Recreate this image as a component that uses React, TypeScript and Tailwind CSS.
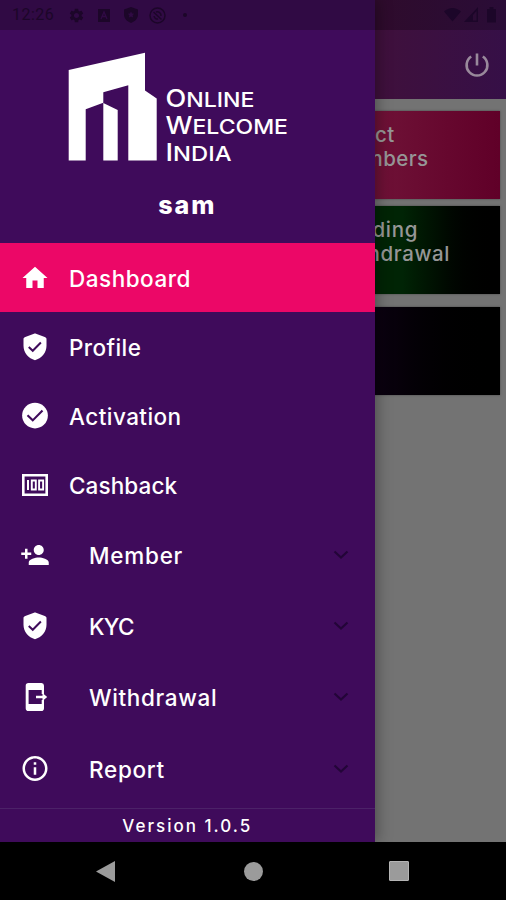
import React from 'react'
import { MdHome, MdPersonAdd, MdInfoOutline, MdSettings } from 'react-icons/md'

const ShieldIcon: React.FC = () => (
  <svg width="30" height="30" viewBox="0 0 24 24">
    <path
      d="M11.190 1.360l-7 2.610C3.070 4.390 2.800 5.010 2.800 5.800V11c0 5.550 4.040 10.240 9.200 11.500 5.160-1.260 9.200-5.950 9.200-11.500V5.800c0-.79-.27-1.410-1.390-1.830l-7-2.610c-.51-.23-1.110-.23-1.620 0z"
      fill="white"
    />
    <path d="M7 12l3.200 3 6.500-6.600" fill="none" stroke="#3f0b5b" strokeWidth="1.600" />
  </svg>
)

const CheckIcon: React.FC = () => (
  <svg width="30" height="30" viewBox="0 0 24 24">
    <circle cx="12" cy="11.600" r="10.300" fill="white" />
    <path d="M6 11.400l4.200 4.100 7.800-7.900" fill="none" stroke="#3f0b5b" strokeWidth="1.700" />
  </svg>
)

// Banknote with "100" drawn as bars
const CashIcon: React.FC = () => (
  <svg width="26" height="22" viewBox="0 0 26 22" fill="none" stroke="white">
    <path d="M1.300 1.300h23.400v19.400H1.300z" strokeWidth="2.600" />
    <path d="M6 6v10" strokeWidth="2" />
    <path d="M9.800 6.500h4v9h-4zM17.100 6.500h4v9h-4z" strokeWidth="1.900" />
  </svg>
)

const PhoneExitIcon: React.FC = () => (
  <svg width="30" height="30" viewBox="0 0 30 30">
    <path
      d="M8.500 1h13A2.800 2.800 0 0 1 24 3.800V12h-2.300V8H8.600v14h13.100v-4H24v8.200a2.800 2.800 0 0 1-2.800 2.800H8.500a2.800 2.800 0 0 1-2.800-2.800V3.800A2.800 2.800 0 0 1 8.500 1z"
      fill="white"
    />
    <path d="M16 13.800h6.500V11l4.700 4-4.700 4v-2.800H16z" fill="white" />
  </svg>
)

const ChevronIcon: React.FC = () => (
  <svg width="16" height="10" viewBox="0 0 16 10">
    <path d="M1.500 1.500L8 7.500l6.500-6" fill="none" stroke="#230538" strokeWidth="2.200" />
  </svg>
)

const Logo: React.FC = () => (
  <svg width="222" height="120" viewBox="68 52 222 120" fill="white" className="font-['Inter',sans-serif] font-medium">
    <path d="M68.700 70L145 52.700V90.500L156.700 98.500V160.500H128.300V85.300L103.300 92.300V102.700L85.700 109.300V160.500H68.700z" />
    <path d="M103.300 103L117.700 110V160.500H103.300z" />
    <text x="165.500" y="106.500" fontSize="24" textLength="89" lengthAdjust="spacingAndGlyphs">
      O<tspan fontSize="20.500">NLINE</tspan>
    </text>
    <text x="165.500" y="133.500" fontSize="24" textLength="122.500" lengthAdjust="spacingAndGlyphs">
      W<tspan fontSize="20.500">ELCOME</tspan>
    </text>
    <text x="165.500" y="161" fontSize="24" textLength="66" lengthAdjust="spacingAndGlyphs">
      I<tspan fontSize="20.500">NDIA</tspan>
    </text>
  </svg>
)

const links = [
  { label: 'Dashboard', icon: <MdHome size={30} />, active: true, text: 'tracking-[0.5px]' },
  { label: 'Profile', icon: <ShieldIcon />, active: false, text: 'tracking-[0.4px]' },
  { label: 'Activation', icon: <CheckIcon />, active: false, text: 'tracking-[0.45px]' },
  { label: 'Cashback', icon: <CashIcon />, active: false, text: 'tracking-[0.1px]' },
]

const groups = [
  { label: 'Member', icon: <MdPersonAdd size={30} />, text: 'tracking-[0.75px]' },
  { label: 'KYC', icon: <ShieldIcon />, text: 'tracking-[-0.7px]' },
  { label: 'Withdrawal', icon: <PhoneExitIcon />, text: 'tracking-[0.65px]' },
  { label: 'Report', icon: <MdInfoOutline size={31} />, text: 'tracking-[0.7px]' },
]

const StatusBar: React.FC = () => (
  <div className="absolute inset-x-0 top-0 h-[30px] flex items-center pl-3 pr-2 text-[#1c0629]">
    <span className="w-[56px] text-[16px] font-['Roboto',sans-serif] tracking-[0.5px]">12:26</span>
    <MdSettings size={17} />
    <svg className="ml-[13px]" width="12" height="13" viewBox="0 0 12 13">
      <path d="M0 0h12v13H0z" fill="currentColor" />
      <path d="M3 10l3-7 3 7M4 7.500h4" fill="none" stroke="#300a44" strokeWidth="1.300" />
    </svg>
    <svg className="ml-[14px]" width="14" height="16" viewBox="0 0 14 16">
      <path d="M7 0l7 2.500v5c0 4-3 7-7 8.500-4-1.500-7-4.500-7-8.500v-5z" fill="currentColor" />
      <path d="M7 4.500l1 2 2.200.3-1.600 1.500.4 2.200-2-1-2 1 .4-2.200-1.600-1.500 2.200-.3z" fill="#300a44" />
    </svg>
    <svg className="ml-[11px]" width="17" height="17" viewBox="0 0 17 17" fill="none" stroke="currentColor" strokeWidth="1.500">
      <circle cx="8.500" cy="8.500" r="7.500" />
      <path d="M4.500 5l8 7.500M5 9a3.500 3.500 0 0 0 4 3M7 5a3.700 3.700 0 0 1 5 4" />
    </svg>
    <span className="ml-[17px] size-1 rounded-full bg-current" />
    <svg className="ml-auto" width="54" height="16" viewBox="0 0 54 16" fill="currentColor">
      <path d="M0 4.500C5-.3 12-.3 17 4.500L8.500 14.500z" />
      <path d="M20 15L34 0V15z M29 8v5.500h3.500V4z" fillRule="evenodd" />
      <path d="M43 2h2.500V0h4v2H52v13.500H43z" />
    </svg>
  </div>
)

const Drawer: React.FC = () => (
  <aside className="absolute left-0 top-0 w-[374.5px] h-[842px] flex flex-col bg-[#3f0b5b] text-white shadow-[2px_0_14px_rgba(0,0,0,0.35)]">
    <div className="h-[30px] shrink-0 bg-[#300a44]" />
    <div className="h-[213px] shrink-0 flex flex-col items-center pt-[22px]">
      <div className="w-[238px]">
        <Logo />
      </div>
      <div className="mt-[17px] text-[25px] leading-8 font-extrabold tracking-[2px]">sam</div>
    </div>

    {links.map((item) => (
      <div
        key={item.label}
        className={`h-[69px] shrink-0 flex items-center pl-5 ${item.active ? 'bg-[#ec0767]' : ''}`}
      >
        <div className="w-[30px] mr-[19px] flex justify-center">{item.icon}</div>
        <span className={`pt-[2px] text-[22.5px] font-medium ${item.text}`}>{item.label}</span>
      </div>
    ))}

    {groups.map((item) => (
      <div key={item.label} className="h-[71.3px] shrink-0 flex items-center pl-5 pr-[26px]">
        <div className="w-[30px] mr-[39px] flex justify-center">{item.icon}</div>
        <span className={`pt-[2px] text-[22.5px] font-medium ${item.text}`}>{item.label}</span>
        <div className="ml-auto">
          <ChevronIcon />
        </div>
      </div>
    ))}

    <div className="mt-auto h-[34px] pt-[2px] border-t border-[#4c2268] flex items-center justify-center text-[17px] font-medium tracking-[2px]">
      Version 1.0.5
    </div>
  </aside>
)

export default function App() {
  return (
    <div className="relative w-[506px] h-[900px] flex flex-col overflow-hidden bg-[#737373] font-['Inter',sans-serif]">
      {/* Dimmed dashboard under the drawer */}
      <header className="shrink-0">
        <div className="h-[30px] bg-linear-to-r from-[#2e0b2c] from-75% to-[#2a0c37]" />
        <div className="h-[69px] flex items-center justify-end pr-[16px] bg-linear-to-r from-[#3f103c] from-75% to-[#360f47]">
          <svg width="26" height="26" viewBox="0 0 26 26" fill="none" stroke="#99899b" strokeWidth="2.600">
            <path d="M13 1.500v12M7.200 4.500a10.400 10.400 0 1 0 11.600 0" />
          </svg>
        </div>
      </header>
      <main className="flex-1 pl-[256px] pr-[6px] pt-3 text-[20.5px] leading-[23.5px] font-medium text-[#969696]">
        <div className="h-[88px] pl-[77px] pt-[12px] shadow-[0_0_2px_#444] bg-linear-to-r from-[#701338] from-45% to-[#600028]">
          <div className="tracking-[0.6px]">Direct</div>
          <div className="tracking-[0.4px]">Members</div>
        </div>
        <div className="mt-[7px] h-[88px] pl-[77px] pt-[12px] shadow-[0_0_2px_#444] bg-linear-to-r from-[#002405] from-60% to-black">
          <div className="tracking-[0.7px]">Pending</div>
          <div className="tracking-[0.6px]">Withdrawal</div>
        </div>
        <div className="mt-[13px] h-[88px] shadow-[0_0_2px_#444] bg-linear-to-r from-[#0b0010] from-50% to-black" />
      </main>

      <Drawer />
      <StatusBar />

      <nav className="relative h-[58px] shrink-0 bg-black flex items-center justify-between pl-[96px] pr-[97px]">
        <svg width="19" height="21" viewBox="0 0 19 21">
          <path d="M0 10.500L19 0v21z" fill="#9b9b9b" />
        </svg>
        <div className="ml-[2px] size-[19px] rounded-full bg-[#9b9b9b]" />
        <div className="size-[20px] rounded-[1px] border border-[#b5b5b5] bg-[#9b9b9b]" />
      </nav>
    </div>
  )
}
